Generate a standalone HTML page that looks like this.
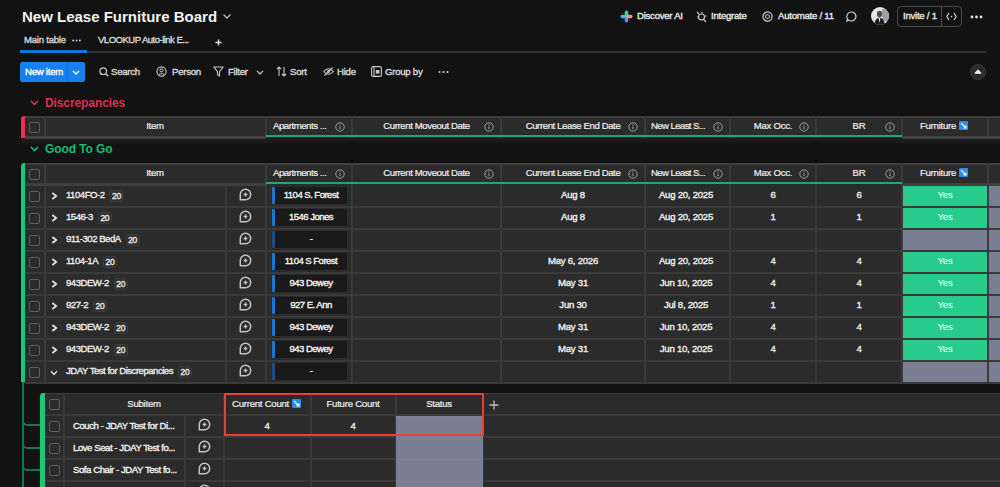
<!DOCTYPE html><html><head><meta charset="utf-8"><style>
html,body{margin:0;padding:0;width:1000px;height:487px;overflow:hidden;background:#121212;}
body{position:relative;font-family:"Liberation Sans",sans-serif;color:#f0f0f0;}
div{position:absolute;box-sizing:border-box;}
.t{white-space:nowrap;font-size:9.6px;line-height:12px;letter-spacing:-0.25px;-webkit-text-stroke:0.35px currentColor;}
.n{white-space:nowrap;}
.h{-webkit-text-stroke:0.2px currentColor;}
.c{text-align:center;transform-origin:center top;}
.bd{display:inline-block;margin-left:5px;padding:0 1.5px;height:10px;line-height:10px;border-radius:3px;background:#303030;border:1px solid #3c3c3c;font-size:8.5px;letter-spacing:-0.3px;color:#e8e8e8;vertical-align:top;margin-top:1px;}
svg{position:absolute;overflow:visible;}
</style></head><body>

<div class="n" style="left:22px;top:8px;font-size:15px;line-height:18px;font-weight:bold;letter-spacing:0px;color:#f2f2f2;">New Lease Furniture Board</div>
<svg style="left:222px;top:13px" width="10" height="7"><path d="M1.5 1.5 L5 5 L8.5 1.5" stroke="#bdbdbd" stroke-width="1.3" fill="none"/></svg>
<div class="t" style="left:24px;top:34px;color:#d8d8d8;">Main table</div>
<svg style="left:72px;top:39px" width="9" height="3"><circle cx="1.2" cy="1.5" r="1" fill="#d0d0d0"/><circle cx="4.5" cy="1.5" r="1" fill="#d0d0d0"/><circle cx="7.8" cy="1.5" r="1" fill="#d0d0d0"/></svg>
<div class="t" style="left:98px;top:34px;color:#d8d8d8;letter-spacing:-0.55px;">VLOOKUP Auto-link E...</div>
<svg style="left:215px;top:39px" width="7" height="7"><path d="M3.5 0.5 V6.5 M0.5 3.5 H6.5" stroke="#e0e0e0" stroke-width="1.4"/></svg>
<div style="left:20px;top:50.5px;width:966px;height:2.5px;background:#333333;"></div>
<div style="left:20px;top:50px;width:67px;height:3px;background:#1276e0;"></div>
<svg style="left:620px;top:10px" width="13" height="13" viewBox="0 0 13 13">
<rect x="4.7" y="0.5" width="3.6" height="6.5" rx="1.8" fill="#3ccf8e"/>
<rect x="0.5" y="4.7" width="6.5" height="3.6" rx="1.8" fill="#3cc0f0"/>
<rect x="4.7" y="6" width="3.6" height="6.5" rx="1.8" fill="#6f86f0"/>
<rect x="6" y="4.7" width="6.5" height="3.6" rx="1.8" fill="#f39a63"/>
</svg>
<div class="t" style="left:637px;top:10px;color:#e8e8e8;">Discover AI</div>
<svg style="left:696px;top:11px" width="11" height="11" viewBox="0 0 11 11">
<circle cx="5.5" cy="6" r="3" stroke="#cfcfcf" stroke-width="1.1" fill="none"/>
<path d="M1 1 L3 3 M8 9 L10 11 M1 6 h1.3 M9 5 h1.6 M6 1v1.4" stroke="#cfcfcf" stroke-width="1.1"/>
</svg>
<div class="t" style="left:711px;top:10px;color:#e8e8e8;">Integrate</div>
<svg style="left:762px;top:11px" width="11" height="11" viewBox="0 0 11 11">
<circle cx="5.5" cy="5.5" r="4.6" stroke="#cfcfcf" stroke-width="1.2" fill="none"/>
<rect x="3.6" y="3.8" width="3.8" height="3.4" rx="0.8" stroke="#cfcfcf" stroke-width="1" fill="none"/>
</svg>
<div class="t" style="left:778px;top:10px;color:#e8e8e8;">Automate / 11</div>
<svg style="left:846px;top:11px" width="11" height="11" viewBox="0 0 11 11">
<path d="M5.5 1 A4.5 4.5 0 1 1 2.6 9 L1 10 L1.6 8 A4.5 4.5 0 0 1 5.5 1Z" stroke="#cfcfcf" stroke-width="1.2" fill="none"/>
</svg>
<svg style="left:871px;top:7px" width="18" height="18" viewBox="0 0 18 18">
<defs><clipPath id="av"><circle cx="9" cy="9" r="9"/></clipPath></defs>
<g clip-path="url(#av)">
<rect width="18" height="18" fill="#e4e6ea"/>
<rect x="11" y="2" width="7" height="12" fill="#9aa3ad"/>
<ellipse cx="8.5" cy="7" rx="2.6" ry="3.2" fill="#5a4a42"/>
<path d="M3 18 Q4 11 8.5 10.5 Q13 11 14 18Z" fill="#1d1d1f"/>
<path d="M7.6 11 L8.5 16 L9.4 11Z" fill="#f0f0f0"/>
</g></svg>
<div style="left:897px;top:6px;width:65px;height:21px;border:1px solid #4a4a4a;border-radius:4px;"></div>
<div style="left:941px;top:6px;width:1px;height:21px;background:#4a4a4a;"></div>
<div class="t" style="left:903px;top:10px;color:#e8e8e8;">Invite / 1</div>
<svg style="left:946px;top:12px" width="11" height="9" viewBox="0 0 11 9">
<path d="M3 1 L0.8 4.5 L3 8 M8 1 L10.2 4.5 L8 8" stroke="#d0d0d0" stroke-width="1.2" fill="none"/>
<circle cx="5.5" cy="4.5" r="0.8" fill="#d0d0d0"/>
</svg>
<svg style="left:970px;top:15px" width="13" height="4"><circle cx="2" cy="2" r="1.4" fill="#e0e0e0"/><circle cx="6.5" cy="2" r="1.4" fill="#e0e0e0"/><circle cx="11" cy="2" r="1.4" fill="#e0e0e0"/></svg>
<div style="left:20px;top:62px;width:65px;height:20px;background:#1580ee;border-radius:2px;"></div>
<div style="left:67px;top:62px;width:1px;height:20px;background:#1170d6;"></div>
<div class="t" style="left:25px;top:66px;color:#ffffff;">New item</div>
<svg style="left:72px;top:70px" width="8" height="5"><path d="M1 1 L4 4 L7 1" stroke="#fff" stroke-width="1.3" fill="none"/></svg>
<svg style="left:99px;top:67px" width="10" height="10" viewBox="0 0 10 10"><circle cx="4.2" cy="4.2" r="3.3" stroke="#c8c8c8" stroke-width="1.2" fill="none"/><path d="M6.7 6.7 L9.3 9.3" stroke="#c8c8c8" stroke-width="1.3"/></svg>
<div class="t" style="left:111px;top:66px;color:#dcdcdc;">Search</div>
<svg style="left:156px;top:66px" width="11" height="11" viewBox="0 0 11 11"><circle cx="5.5" cy="5.5" r="4.6" stroke="#c8c8c8" stroke-width="1.1" fill="none"/><circle cx="5.5" cy="4.3" r="1.6" stroke="#c8c8c8" stroke-width="1" fill="none"/><path d="M2.8 8.5 Q5.5 5.8 8.2 8.5" stroke="#c8c8c8" stroke-width="1" fill="none"/></svg>
<div class="t" style="left:172px;top:66px;color:#dcdcdc;">Person</div>
<svg style="left:213px;top:66px" width="11" height="11" viewBox="0 0 11 11"><path d="M0.8 1 H10.2 L6.5 5.6 V10 L4.5 8.8 V5.6 Z" stroke="#c8c8c8" stroke-width="1.1" fill="none" stroke-linejoin="round"/></svg>
<div class="t" style="left:228px;top:66px;color:#dcdcdc;">Filter</div>
<svg style="left:256px;top:70px" width="8" height="5"><path d="M1 1 L4 4 L7 1" stroke="#c8c8c8" stroke-width="1.2" fill="none"/></svg>
<svg style="left:276px;top:66px" width="11" height="11" viewBox="0 0 11 11"><path d="M3 10 V1 M1 3 L3 1 L5 3 M8 1 V10 M6 8 L8 10 L10 8" stroke="#c8c8c8" stroke-width="1.1" fill="none"/></svg>
<div class="t" style="left:290px;top:66px;color:#dcdcdc;">Sort</div>
<svg style="left:323px;top:67px" width="11" height="9" viewBox="0 0 11 9"><path d="M0.7 4.5 Q5.5 -1 10.3 4.5 Q5.5 10 0.7 4.5Z" stroke="#c8c8c8" stroke-width="1.1" fill="none"/><circle cx="5.5" cy="4.5" r="1.5" fill="#c8c8c8"/><path d="M1.5 8.5 L9.5 0.5" stroke="#c8c8c8" stroke-width="1.1"/></svg>
<div class="t" style="left:337px;top:66px;color:#dcdcdc;">Hide</div>
<svg style="left:371px;top:66px" width="11" height="11" viewBox="0 0 11 11"><rect x="0.6" y="0.6" width="9.8" height="9.8" rx="1.5" stroke="#c8c8c8" stroke-width="1.1" fill="none"/><path d="M3 0.6 V10.4" stroke="#c8c8c8" stroke-width="1.1"/><rect x="4.8" y="4" width="3.6" height="3.6" fill="#c8c8c8"/></svg>
<div class="t" style="left:385px;top:66px;color:#dcdcdc;">Group by</div>
<svg style="left:438px;top:70px" width="11" height="4"><circle cx="1.5" cy="2" r="1.1" fill="#c8c8c8"/><circle cx="5.5" cy="2" r="1.1" fill="#c8c8c8"/><circle cx="9.5" cy="2" r="1.1" fill="#c8c8c8"/></svg>
<div style="left:970px;top:64px;width:16px;height:16px;border-radius:50%;background:#2c2c2c;border:1px solid #383838;"></div>
<svg style="left:974px;top:69px" width="8" height="5"><path d="M1.2 4.2 L4 1.2 L6.8 4.2 Z" stroke="#f0f0f0" stroke-width="1.2" fill="#f0f0f0" stroke-linejoin="round"/></svg>
<svg style="left:30px;top:100px" width="9" height="6"><path d="M1 1 L4.5 4.5 L8 1" stroke="#e8304f" stroke-width="1.5" fill="none"/></svg>
<div class="n" style="left:45px;top:96px;font-size:12px;line-height:15px;font-weight:bold;color:#dc2f50;letter-spacing:-0.1px;">Discrepancies</div>
<svg style="left:30px;top:146px" width="9" height="6"><path d="M1 1 L4.5 4.5 L8 1" stroke="#16c97c" stroke-width="1.5" fill="none"/></svg>
<div class="n" style="left:45px;top:142px;font-size:12px;line-height:15px;font-weight:bold;color:#14bd74;letter-spacing:-0.1px;">Good To Go</div>
<div style="left:21px;top:116px;width:4px;height:22px;background:#e8304f;border-radius:3px 0 0 0;"></div>
<div style="left:25px;top:116px;width:1000px;height:22px;background:#2b2b2b;"></div>
<div style="left:21px;top:115px;width:1000px;height:1px;background:#0e0e0e;"></div>
<div style="left:21px;top:138px;width:1000px;height:5px;background:#1a1a1a;"></div>
<div style="left:21px;top:163px;width:4px;height:22px;background:#16c97c;border-radius:3px 0 0 0;"></div>
<div style="left:25px;top:163px;width:1000px;height:22px;background:#2b2b2b;"></div>
<div style="left:21px;top:162px;width:1000px;height:1px;background:#0e0e0e;"></div>
<div style="left:21px;top:185px;width:4px;height:197px;background:#16c97c;"></div>
<div style="left:25px;top:185px;width:1000px;height:197px;background:#2b2b2b;"></div>
<div style="left:902px;top:185px;width:86px;height:22px;background:#27cb8b;"></div>
<div style="left:988px;top:185px;width:20px;height:22px;background:#7a7e93;"></div>
<div style="left:902px;top:207px;width:86px;height:22px;background:#27cb8b;"></div>
<div style="left:988px;top:207px;width:20px;height:22px;background:#7a7e93;"></div>
<div style="left:902px;top:229px;width:86px;height:22px;background:#7a7e93;"></div>
<div style="left:988px;top:229px;width:20px;height:22px;background:#7a7e93;"></div>
<div style="left:902px;top:251px;width:86px;height:22px;background:#27cb8b;"></div>
<div style="left:988px;top:251px;width:20px;height:22px;background:#7a7e93;"></div>
<div style="left:902px;top:273px;width:86px;height:22px;background:#27cb8b;"></div>
<div style="left:988px;top:273px;width:20px;height:22px;background:#7a7e93;"></div>
<div style="left:902px;top:295px;width:86px;height:22px;background:#27cb8b;"></div>
<div style="left:988px;top:295px;width:20px;height:22px;background:#7a7e93;"></div>
<div style="left:902px;top:317px;width:86px;height:22px;background:#27cb8b;"></div>
<div style="left:988px;top:317px;width:20px;height:22px;background:#7a7e93;"></div>
<div style="left:902px;top:339px;width:86px;height:22px;background:#27cb8b;"></div>
<div style="left:988px;top:339px;width:20px;height:22px;background:#7a7e93;"></div>
<div style="left:902px;top:361px;width:86px;height:22px;background:#7a7e93;"></div>
<div style="left:988px;top:361px;width:20px;height:22px;background:#7a7e93;"></div>
<div style="left:21px;top:382px;width:1000px;height:11px;background:#121212;"></div>
<div style="left:22px;top:382px;width:2px;height:105px;background:#1a7450;"></div>
<div style="left:22px;top:416px;width:19px;height:10px;border-left:2px solid #1a7450;border-bottom:2px solid #1a7450;border-bottom-left-radius:5px;"></div>
<div style="left:22px;top:439px;width:19px;height:10px;border-left:2px solid #1a7450;border-bottom:2px solid #1a7450;border-bottom-left-radius:5px;"></div>
<div style="left:22px;top:461px;width:19px;height:10px;border-left:2px solid #1a7450;border-bottom:2px solid #1a7450;border-bottom-left-radius:5px;"></div>
<div style="left:40px;top:393px;width:5px;height:94px;background:#16c97c;border-radius:3px 0 0 0;"></div>
<div style="left:45px;top:393px;width:1000px;height:94px;background:#2b2b2b;"></div>
<div style="left:25px;top:116px;width:1000px;height:2px;background:#404040;"></div>
<div style="left:44px;top:116px;width:2px;height:22px;background:#3a3a3a;"></div>
<div style="left:265px;top:116px;width:2px;height:22px;background:#3a3a3a;"></div>
<div style="left:351px;top:116px;width:2px;height:22px;background:#3a3a3a;"></div>
<div style="left:500px;top:116px;width:2px;height:22px;background:#3a3a3a;"></div>
<div style="left:644px;top:116px;width:2px;height:22px;background:#3a3a3a;"></div>
<div style="left:729px;top:116px;width:2px;height:22px;background:#3a3a3a;"></div>
<div style="left:815px;top:116px;width:2px;height:22px;background:#3a3a3a;"></div>
<div style="left:901px;top:116px;width:2px;height:22px;background:#3a3a3a;"></div>
<div style="left:987px;top:116px;width:2px;height:22px;background:#3a3a3a;"></div>
<div style="left:25px;top:136px;width:241px;height:3px;background:#404040;"></div>
<div style="left:902px;top:136px;width:200px;height:3px;background:#404040;"></div>
<div style="left:266px;top:135px;width:636px;height:2px;background:#24a373;"></div>
<div style="left:25px;top:163px;width:1000px;height:2px;background:#404040;"></div>
<div style="left:44px;top:163px;width:2px;height:22px;background:#3a3a3a;"></div>
<div style="left:265px;top:163px;width:2px;height:22px;background:#3a3a3a;"></div>
<div style="left:351px;top:163px;width:2px;height:22px;background:#3a3a3a;"></div>
<div style="left:500px;top:163px;width:2px;height:22px;background:#3a3a3a;"></div>
<div style="left:644px;top:163px;width:2px;height:22px;background:#3a3a3a;"></div>
<div style="left:729px;top:163px;width:2px;height:22px;background:#3a3a3a;"></div>
<div style="left:815px;top:163px;width:2px;height:22px;background:#3a3a3a;"></div>
<div style="left:901px;top:163px;width:2px;height:22px;background:#3a3a3a;"></div>
<div style="left:987px;top:163px;width:2px;height:22px;background:#3a3a3a;"></div>
<div style="left:25px;top:183px;width:241px;height:3px;background:#404040;"></div>
<div style="left:902px;top:183px;width:200px;height:3px;background:#404040;"></div>
<div style="left:266px;top:182px;width:636px;height:2px;background:#24a373;"></div>
<div style="left:44px;top:185px;width:2px;height:197px;background:#3a3a3a;"></div>
<div style="left:265px;top:185px;width:2px;height:197px;background:#3a3a3a;"></div>
<div style="left:351px;top:185px;width:2px;height:197px;background:#3a3a3a;"></div>
<div style="left:500px;top:185px;width:2px;height:197px;background:#3a3a3a;"></div>
<div style="left:644px;top:185px;width:2px;height:197px;background:#3a3a3a;"></div>
<div style="left:729px;top:185px;width:2px;height:197px;background:#3a3a3a;"></div>
<div style="left:815px;top:185px;width:2px;height:197px;background:#3a3a3a;"></div>
<div style="left:901px;top:185px;width:2px;height:197px;background:#3a3a3a;"></div>
<div style="left:987px;top:185px;width:2px;height:197px;background:#3a3a3a;"></div>
<div style="left:225px;top:185px;width:2px;height:197px;background:#3a3a3a;"></div>
<div style="left:25px;top:206px;width:1000px;height:2px;background:#3a3a3a;"></div>
<div style="left:25px;top:228px;width:1000px;height:2px;background:#3a3a3a;"></div>
<div style="left:25px;top:250px;width:1000px;height:2px;background:#3a3a3a;"></div>
<div style="left:25px;top:272px;width:1000px;height:2px;background:#3a3a3a;"></div>
<div style="left:25px;top:294px;width:1000px;height:2px;background:#3a3a3a;"></div>
<div style="left:25px;top:316px;width:1000px;height:2px;background:#3a3a3a;"></div>
<div style="left:25px;top:338px;width:1000px;height:2px;background:#3a3a3a;"></div>
<div style="left:25px;top:360px;width:1000px;height:2px;background:#3a3a3a;"></div>
<div style="left:25px;top:382px;width:1000px;height:2px;background:#3a3a3a;"></div>
<div style="left:45px;top:393px;width:1000px;height:1px;background:#404040;"></div>
<div style="left:63px;top:393px;width:2px;height:94px;background:#3a3a3a;"></div>
<div style="left:223px;top:393px;width:2px;height:94px;background:#3a3a3a;"></div>
<div style="left:310px;top:393px;width:2px;height:94px;background:#3a3a3a;"></div>
<div style="left:395px;top:393px;width:2px;height:94px;background:#3a3a3a;"></div>
<div style="left:482px;top:393px;width:2px;height:94px;background:#3a3a3a;"></div>
<div style="left:184px;top:415px;width:2px;height:72px;background:#3a3a3a;"></div>
<div style="left:45px;top:414px;width:1000px;height:2px;background:#3a3a3a;"></div>
<div style="left:45px;top:436px;width:1000px;height:2px;background:#3a3a3a;"></div>
<div style="left:45px;top:458px;width:1000px;height:2px;background:#3a3a3a;"></div>
<div style="left:45px;top:480px;width:1000px;height:2px;background:#3a3a3a;"></div>
<div style="left:29px;top:122px;width:11px;height:11px;border:1.2px solid #5e5e5e;border-radius:2px;"></div>
<div class="t h c" style="left:5px;top:120px;width:300px;">Item</div>
<div class="t h" style="left:273px;top:120px;letter-spacing:-0.45px;">Apartments ...</div>
<svg style="left:335px;top:122px" width="10" height="10" viewBox="0 0 10 10"><circle cx="5" cy="5" r="4.2" stroke="#a8a8a8" stroke-width="0.9" fill="none"/><path d="M5 4.4 V7.2" stroke="#a8a8a8" stroke-width="1"/><circle cx="5" cy="2.9" r="0.55" fill="#a8a8a8"/></svg>
<div class="t h c" style="left:276.5px;top:120px;width:300px;letter-spacing:-0.4px;">Current Moveout Date</div>
<svg style="left:484px;top:122px" width="10" height="10" viewBox="0 0 10 10"><circle cx="5" cy="5" r="4.2" stroke="#a8a8a8" stroke-width="0.9" fill="none"/><path d="M5 4.4 V7.2" stroke="#a8a8a8" stroke-width="1"/><circle cx="5" cy="2.9" r="0.55" fill="#a8a8a8"/></svg>
<div class="t h c" style="left:423.0px;top:120px;width:300px;letter-spacing:-0.4px;">Current Lease End Date</div>
<svg style="left:628px;top:122px" width="10" height="10" viewBox="0 0 10 10"><circle cx="5" cy="5" r="4.2" stroke="#a8a8a8" stroke-width="0.9" fill="none"/><path d="M5 4.4 V7.2" stroke="#a8a8a8" stroke-width="1"/><circle cx="5" cy="2.9" r="0.55" fill="#a8a8a8"/></svg>
<div class="t h" style="left:651px;top:120px;letter-spacing:-0.6px;">New Least S...</div>
<svg style="left:713px;top:122px" width="10" height="10" viewBox="0 0 10 10"><circle cx="5" cy="5" r="4.2" stroke="#a8a8a8" stroke-width="0.9" fill="none"/><path d="M5 4.4 V7.2" stroke="#a8a8a8" stroke-width="1"/><circle cx="5" cy="2.9" r="0.55" fill="#a8a8a8"/></svg>
<div class="t h c" style="left:623.0px;top:120px;width:300px;">Max Occ.</div>
<svg style="left:799px;top:122px" width="10" height="10" viewBox="0 0 10 10"><circle cx="5" cy="5" r="4.2" stroke="#a8a8a8" stroke-width="0.9" fill="none"/><path d="M5 4.4 V7.2" stroke="#a8a8a8" stroke-width="1"/><circle cx="5" cy="2.9" r="0.55" fill="#a8a8a8"/></svg>
<div class="t h c" style="left:709.0px;top:120px;width:300px;">BR</div>
<svg style="left:885px;top:122px" width="10" height="10" viewBox="0 0 10 10"><circle cx="5" cy="5" r="4.2" stroke="#a8a8a8" stroke-width="0.9" fill="none"/><path d="M5 4.4 V7.2" stroke="#a8a8a8" stroke-width="1"/><circle cx="5" cy="2.9" r="0.55" fill="#a8a8a8"/></svg>
<div class="t h c" style="left:788px;top:120px;width:300px;">Furniture</div>
<svg style="left:959px;top:121px" width="9" height="9" viewBox="0 0 9 9"><rect width="9" height="9" rx="1" fill="#2f8be6"/><path d="M2 2 L7 7 M7 4.5 V7 H4.5" stroke="#ffffff" stroke-width="1.1" fill="none"/></svg>
<div style="left:29px;top:169px;width:11px;height:11px;border:1.2px solid #5e5e5e;border-radius:2px;"></div>
<div class="t h c" style="left:5px;top:167px;width:300px;">Item</div>
<div class="t h" style="left:273px;top:167px;letter-spacing:-0.45px;">Apartments ...</div>
<svg style="left:335px;top:169px" width="10" height="10" viewBox="0 0 10 10"><circle cx="5" cy="5" r="4.2" stroke="#a8a8a8" stroke-width="0.9" fill="none"/><path d="M5 4.4 V7.2" stroke="#a8a8a8" stroke-width="1"/><circle cx="5" cy="2.9" r="0.55" fill="#a8a8a8"/></svg>
<div class="t h c" style="left:276.5px;top:167px;width:300px;letter-spacing:-0.4px;">Current Moveout Date</div>
<svg style="left:484px;top:169px" width="10" height="10" viewBox="0 0 10 10"><circle cx="5" cy="5" r="4.2" stroke="#a8a8a8" stroke-width="0.9" fill="none"/><path d="M5 4.4 V7.2" stroke="#a8a8a8" stroke-width="1"/><circle cx="5" cy="2.9" r="0.55" fill="#a8a8a8"/></svg>
<div class="t h c" style="left:423.0px;top:167px;width:300px;letter-spacing:-0.4px;">Current Lease End Date</div>
<svg style="left:628px;top:169px" width="10" height="10" viewBox="0 0 10 10"><circle cx="5" cy="5" r="4.2" stroke="#a8a8a8" stroke-width="0.9" fill="none"/><path d="M5 4.4 V7.2" stroke="#a8a8a8" stroke-width="1"/><circle cx="5" cy="2.9" r="0.55" fill="#a8a8a8"/></svg>
<div class="t h" style="left:651px;top:167px;letter-spacing:-0.6px;">New Least S...</div>
<svg style="left:713px;top:169px" width="10" height="10" viewBox="0 0 10 10"><circle cx="5" cy="5" r="4.2" stroke="#a8a8a8" stroke-width="0.9" fill="none"/><path d="M5 4.4 V7.2" stroke="#a8a8a8" stroke-width="1"/><circle cx="5" cy="2.9" r="0.55" fill="#a8a8a8"/></svg>
<div class="t h c" style="left:623.0px;top:167px;width:300px;">Max Occ.</div>
<svg style="left:799px;top:169px" width="10" height="10" viewBox="0 0 10 10"><circle cx="5" cy="5" r="4.2" stroke="#a8a8a8" stroke-width="0.9" fill="none"/><path d="M5 4.4 V7.2" stroke="#a8a8a8" stroke-width="1"/><circle cx="5" cy="2.9" r="0.55" fill="#a8a8a8"/></svg>
<div class="t h c" style="left:709.0px;top:167px;width:300px;">BR</div>
<svg style="left:885px;top:169px" width="10" height="10" viewBox="0 0 10 10"><circle cx="5" cy="5" r="4.2" stroke="#a8a8a8" stroke-width="0.9" fill="none"/><path d="M5 4.4 V7.2" stroke="#a8a8a8" stroke-width="1"/><circle cx="5" cy="2.9" r="0.55" fill="#a8a8a8"/></svg>
<div class="t h c" style="left:788px;top:167px;width:300px;">Furniture</div>
<svg style="left:959px;top:168px" width="9" height="9" viewBox="0 0 9 9"><rect width="9" height="9" rx="1" fill="#2f8be6"/><path d="M2 2 L7 7 M7 4.5 V7 H4.5" stroke="#ffffff" stroke-width="1.1" fill="none"/></svg>
<div class="t c" style="left:795px;top:189px;width:300px;color:#ffffff;-webkit-text-stroke:0px;">Yes</div>
<div style="left:29px;top:191px;width:11px;height:11px;border:1.2px solid #5e5e5e;border-radius:2px;"></div>
<svg style="left:51px;top:192px" width="7" height="8"><path d="M1.3 1 L5.3 4 L1.3 7" stroke="#e8e8e8" stroke-width="1.6" fill="none"/></svg>
<div class="t" style="left:66px;top:189px;color:#ececec;letter-spacing:-0.5px;">1104FO-2<span class="bd">20</span></div>
<svg style="left:239px;top:188px" width="13" height="13" viewBox="0 0 13 13"><path d="M1.3 6.5 A5.2 5.2 0 1 1 6.5 11.7 H1.3 Z" stroke="#c4c4c4" stroke-width="1.5" fill="none" stroke-linejoin="round"/><path d="M6.5 4.6 V8.4 M4.6 6.5 H8.4" stroke="#c4c4c4" stroke-width="1.3"/></svg>
<div style="left:272px;top:187px;width:3px;height:17px;background:#1f76d2;border-radius:1px;"></div>
<div style="left:275px;top:187px;width:72px;height:17px;background:#1a1a1a;"></div>
<div class="t c" style="left:161px;top:189px;width:300px;color:#f4f4f4;letter-spacing:-0.55px;">1104 S. Forest</div>
<div class="t c" style="left:423px;top:189px;width:300px;">Aug 8</div>
<div class="t c" style="left:536px;top:189px;width:300px;">Aug 20, 2025</div>
<div class="t c" style="left:623px;top:189px;width:300px;">6</div>
<div class="t c" style="left:709px;top:189px;width:300px;">6</div>
<div class="t c" style="left:795px;top:211px;width:300px;color:#ffffff;-webkit-text-stroke:0px;">Yes</div>
<div style="left:29px;top:213px;width:11px;height:11px;border:1.2px solid #5e5e5e;border-radius:2px;"></div>
<svg style="left:51px;top:214px" width="7" height="8"><path d="M1.3 1 L5.3 4 L1.3 7" stroke="#e8e8e8" stroke-width="1.6" fill="none"/></svg>
<div class="t" style="left:66px;top:211px;color:#ececec;letter-spacing:-0.5px;">1546-3<span class="bd">20</span></div>
<svg style="left:239px;top:210px" width="13" height="13" viewBox="0 0 13 13"><path d="M1.3 6.5 A5.2 5.2 0 1 1 6.5 11.7 H1.3 Z" stroke="#c4c4c4" stroke-width="1.5" fill="none" stroke-linejoin="round"/><path d="M6.5 4.6 V8.4 M4.6 6.5 H8.4" stroke="#c4c4c4" stroke-width="1.3"/></svg>
<div style="left:272px;top:209px;width:3px;height:17px;background:#1f76d2;border-radius:1px;"></div>
<div style="left:275px;top:209px;width:72px;height:17px;background:#1a1a1a;"></div>
<div class="t c" style="left:161px;top:211px;width:300px;color:#f4f4f4;letter-spacing:-0.55px;">1546 Jones</div>
<div class="t c" style="left:423px;top:211px;width:300px;">Aug 8</div>
<div class="t c" style="left:536px;top:211px;width:300px;">Aug 20, 2025</div>
<div class="t c" style="left:623px;top:211px;width:300px;">1</div>
<div class="t c" style="left:709px;top:211px;width:300px;">1</div>
<div style="left:29px;top:235px;width:11px;height:11px;border:1.2px solid #5e5e5e;border-radius:2px;"></div>
<svg style="left:51px;top:236px" width="7" height="8"><path d="M1.3 1 L5.3 4 L1.3 7" stroke="#e8e8e8" stroke-width="1.6" fill="none"/></svg>
<div class="t" style="left:66px;top:233px;color:#ececec;letter-spacing:-0.5px;">911-302 BedA<span class="bd">20</span></div>
<svg style="left:239px;top:232px" width="13" height="13" viewBox="0 0 13 13"><path d="M1.3 6.5 A5.2 5.2 0 1 1 6.5 11.7 H1.3 Z" stroke="#c4c4c4" stroke-width="1.5" fill="none" stroke-linejoin="round"/><path d="M6.5 4.6 V8.4 M4.6 6.5 H8.4" stroke="#c4c4c4" stroke-width="1.3"/></svg>
<div style="left:272px;top:231px;width:3px;height:17px;background:#1b4f86;border-radius:1px;"></div>
<div style="left:275px;top:231px;width:72px;height:17px;background:#1a1a1a;"></div>
<div class="t c" style="left:161px;top:233px;width:300px;color:#f4f4f4;letter-spacing:-0.55px;">-</div>
<div class="t c" style="left:795px;top:255px;width:300px;color:#ffffff;-webkit-text-stroke:0px;">Yes</div>
<div style="left:29px;top:257px;width:11px;height:11px;border:1.2px solid #5e5e5e;border-radius:2px;"></div>
<svg style="left:51px;top:258px" width="7" height="8"><path d="M1.3 1 L5.3 4 L1.3 7" stroke="#e8e8e8" stroke-width="1.6" fill="none"/></svg>
<div class="t" style="left:66px;top:255px;color:#ececec;letter-spacing:-0.5px;">1104-1A<span class="bd">20</span></div>
<svg style="left:239px;top:254px" width="13" height="13" viewBox="0 0 13 13"><path d="M1.3 6.5 A5.2 5.2 0 1 1 6.5 11.7 H1.3 Z" stroke="#c4c4c4" stroke-width="1.5" fill="none" stroke-linejoin="round"/><path d="M6.5 4.6 V8.4 M4.6 6.5 H8.4" stroke="#c4c4c4" stroke-width="1.3"/></svg>
<div style="left:272px;top:253px;width:3px;height:17px;background:#1f76d2;border-radius:1px;"></div>
<div style="left:275px;top:253px;width:72px;height:17px;background:#1a1a1a;"></div>
<div class="t c" style="left:161px;top:255px;width:300px;color:#f4f4f4;letter-spacing:-0.55px;">1104 S Forest</div>
<div class="t c" style="left:423px;top:255px;width:300px;">May 6, 2026</div>
<div class="t c" style="left:536px;top:255px;width:300px;">Aug 20, 2025</div>
<div class="t c" style="left:623px;top:255px;width:300px;">4</div>
<div class="t c" style="left:709px;top:255px;width:300px;">4</div>
<div class="t c" style="left:795px;top:277px;width:300px;color:#ffffff;-webkit-text-stroke:0px;">Yes</div>
<div style="left:29px;top:279px;width:11px;height:11px;border:1.2px solid #5e5e5e;border-radius:2px;"></div>
<svg style="left:51px;top:280px" width="7" height="8"><path d="M1.3 1 L5.3 4 L1.3 7" stroke="#e8e8e8" stroke-width="1.6" fill="none"/></svg>
<div class="t" style="left:66px;top:277px;color:#ececec;letter-spacing:-0.5px;">943DEW-2<span class="bd">20</span></div>
<svg style="left:239px;top:276px" width="13" height="13" viewBox="0 0 13 13"><path d="M1.3 6.5 A5.2 5.2 0 1 1 6.5 11.7 H1.3 Z" stroke="#c4c4c4" stroke-width="1.5" fill="none" stroke-linejoin="round"/><path d="M6.5 4.6 V8.4 M4.6 6.5 H8.4" stroke="#c4c4c4" stroke-width="1.3"/></svg>
<div style="left:272px;top:275px;width:3px;height:17px;background:#1f76d2;border-radius:1px;"></div>
<div style="left:275px;top:275px;width:72px;height:17px;background:#1a1a1a;"></div>
<div class="t c" style="left:161px;top:277px;width:300px;color:#f4f4f4;letter-spacing:-0.55px;">943 Dewey</div>
<div class="t c" style="left:423px;top:277px;width:300px;">May 31</div>
<div class="t c" style="left:536px;top:277px;width:300px;">Jun 10, 2025</div>
<div class="t c" style="left:623px;top:277px;width:300px;">4</div>
<div class="t c" style="left:709px;top:277px;width:300px;">4</div>
<div class="t c" style="left:795px;top:299px;width:300px;color:#ffffff;-webkit-text-stroke:0px;">Yes</div>
<div style="left:29px;top:301px;width:11px;height:11px;border:1.2px solid #5e5e5e;border-radius:2px;"></div>
<svg style="left:51px;top:302px" width="7" height="8"><path d="M1.3 1 L5.3 4 L1.3 7" stroke="#e8e8e8" stroke-width="1.6" fill="none"/></svg>
<div class="t" style="left:66px;top:299px;color:#ececec;letter-spacing:-0.5px;">927-2<span class="bd">20</span></div>
<svg style="left:239px;top:298px" width="13" height="13" viewBox="0 0 13 13"><path d="M1.3 6.5 A5.2 5.2 0 1 1 6.5 11.7 H1.3 Z" stroke="#c4c4c4" stroke-width="1.5" fill="none" stroke-linejoin="round"/><path d="M6.5 4.6 V8.4 M4.6 6.5 H8.4" stroke="#c4c4c4" stroke-width="1.3"/></svg>
<div style="left:272px;top:297px;width:3px;height:17px;background:#1f76d2;border-radius:1px;"></div>
<div style="left:275px;top:297px;width:72px;height:17px;background:#1a1a1a;"></div>
<div class="t c" style="left:161px;top:299px;width:300px;color:#f4f4f4;letter-spacing:-0.55px;">927 E. Ann</div>
<div class="t c" style="left:423px;top:299px;width:300px;">Jun 30</div>
<div class="t c" style="left:536px;top:299px;width:300px;">Jul 8, 2025</div>
<div class="t c" style="left:623px;top:299px;width:300px;">1</div>
<div class="t c" style="left:709px;top:299px;width:300px;">1</div>
<div class="t c" style="left:795px;top:321px;width:300px;color:#ffffff;-webkit-text-stroke:0px;">Yes</div>
<div style="left:29px;top:323px;width:11px;height:11px;border:1.2px solid #5e5e5e;border-radius:2px;"></div>
<svg style="left:51px;top:324px" width="7" height="8"><path d="M1.3 1 L5.3 4 L1.3 7" stroke="#e8e8e8" stroke-width="1.6" fill="none"/></svg>
<div class="t" style="left:66px;top:321px;color:#ececec;letter-spacing:-0.5px;">943DEW-2<span class="bd">20</span></div>
<svg style="left:239px;top:320px" width="13" height="13" viewBox="0 0 13 13"><path d="M1.3 6.5 A5.2 5.2 0 1 1 6.5 11.7 H1.3 Z" stroke="#c4c4c4" stroke-width="1.5" fill="none" stroke-linejoin="round"/><path d="M6.5 4.6 V8.4 M4.6 6.5 H8.4" stroke="#c4c4c4" stroke-width="1.3"/></svg>
<div style="left:272px;top:319px;width:3px;height:17px;background:#1f76d2;border-radius:1px;"></div>
<div style="left:275px;top:319px;width:72px;height:17px;background:#1a1a1a;"></div>
<div class="t c" style="left:161px;top:321px;width:300px;color:#f4f4f4;letter-spacing:-0.55px;">943 Dewey</div>
<div class="t c" style="left:423px;top:321px;width:300px;">May 31</div>
<div class="t c" style="left:536px;top:321px;width:300px;">Jun 10, 2025</div>
<div class="t c" style="left:623px;top:321px;width:300px;">4</div>
<div class="t c" style="left:709px;top:321px;width:300px;">4</div>
<div class="t c" style="left:795px;top:343px;width:300px;color:#ffffff;-webkit-text-stroke:0px;">Yes</div>
<div style="left:29px;top:345px;width:11px;height:11px;border:1.2px solid #5e5e5e;border-radius:2px;"></div>
<svg style="left:51px;top:346px" width="7" height="8"><path d="M1.3 1 L5.3 4 L1.3 7" stroke="#e8e8e8" stroke-width="1.6" fill="none"/></svg>
<div class="t" style="left:66px;top:343px;color:#ececec;letter-spacing:-0.5px;">943DEW-2<span class="bd">20</span></div>
<svg style="left:239px;top:342px" width="13" height="13" viewBox="0 0 13 13"><path d="M1.3 6.5 A5.2 5.2 0 1 1 6.5 11.7 H1.3 Z" stroke="#c4c4c4" stroke-width="1.5" fill="none" stroke-linejoin="round"/><path d="M6.5 4.6 V8.4 M4.6 6.5 H8.4" stroke="#c4c4c4" stroke-width="1.3"/></svg>
<div style="left:272px;top:341px;width:3px;height:17px;background:#1f76d2;border-radius:1px;"></div>
<div style="left:275px;top:341px;width:72px;height:17px;background:#1a1a1a;"></div>
<div class="t c" style="left:161px;top:343px;width:300px;color:#f4f4f4;letter-spacing:-0.55px;">943 Dewey</div>
<div class="t c" style="left:423px;top:343px;width:300px;">May 31</div>
<div class="t c" style="left:536px;top:343px;width:300px;">Jun 10, 2025</div>
<div class="t c" style="left:623px;top:343px;width:300px;">4</div>
<div class="t c" style="left:709px;top:343px;width:300px;">4</div>
<div style="left:29px;top:367px;width:11px;height:11px;border:1.2px solid #5e5e5e;border-radius:2px;"></div>
<svg style="left:50px;top:370px" width="8" height="6"><path d="M1 1.2 L4 4.5 L7 1.2" stroke="#e0e0e0" stroke-width="1.4" fill="none"/></svg>
<div class="t" style="left:66px;top:365px;color:#ececec;letter-spacing:-0.5px;">JDAY Test for Discrepancies<span class="bd">20</span></div>
<svg style="left:239px;top:364px" width="13" height="13" viewBox="0 0 13 13"><path d="M1.3 6.5 A5.2 5.2 0 1 1 6.5 11.7 H1.3 Z" stroke="#c4c4c4" stroke-width="1.5" fill="none" stroke-linejoin="round"/><path d="M6.5 4.6 V8.4 M4.6 6.5 H8.4" stroke="#c4c4c4" stroke-width="1.3"/></svg>
<div style="left:272px;top:363px;width:3px;height:17px;background:#1b4f86;border-radius:1px;"></div>
<div style="left:275px;top:363px;width:72px;height:17px;background:#1a1a1a;"></div>
<div class="t c" style="left:161px;top:365px;width:300px;color:#f4f4f4;letter-spacing:-0.55px;">-</div>
<div style="left:396px;top:416px;width:87px;height:22px;background:#7a7e93;border-top:1px solid #80849a;"></div>
<div class="t" style="left:73px;top:420px;letter-spacing:-0.45px;">Couch - JDAY Test for Di...</div>
<svg style="left:198px;top:418px" width="13" height="13" viewBox="0 0 13 13"><path d="M1.3 6.5 A5.2 5.2 0 1 1 6.5 11.7 H1.3 Z" stroke="#c4c4c4" stroke-width="1.5" fill="none" stroke-linejoin="round"/><path d="M6.5 4.6 V8.4 M4.6 6.5 H8.4" stroke="#c4c4c4" stroke-width="1.3"/></svg>
<div style="left:396px;top:437px;width:87px;height:22px;background:#7a7e93;border-top:1px solid #80849a;"></div>
<div class="t" style="left:73px;top:442px;letter-spacing:-0.45px;">Love Seat - JDAY Test fo...</div>
<svg style="left:198px;top:440px" width="13" height="13" viewBox="0 0 13 13"><path d="M1.3 6.5 A5.2 5.2 0 1 1 6.5 11.7 H1.3 Z" stroke="#c4c4c4" stroke-width="1.5" fill="none" stroke-linejoin="round"/><path d="M6.5 4.6 V8.4 M4.6 6.5 H8.4" stroke="#c4c4c4" stroke-width="1.3"/></svg>
<div style="left:396px;top:459px;width:87px;height:22px;background:#7a7e93;border-top:1px solid #80849a;"></div>
<div class="t" style="left:73px;top:464px;letter-spacing:-0.45px;">Sofa Chair - JDAY Test fo...</div>
<svg style="left:198px;top:462px" width="13" height="13" viewBox="0 0 13 13"><path d="M1.3 6.5 A5.2 5.2 0 1 1 6.5 11.7 H1.3 Z" stroke="#c4c4c4" stroke-width="1.5" fill="none" stroke-linejoin="round"/><path d="M6.5 4.6 V8.4 M4.6 6.5 H8.4" stroke="#c4c4c4" stroke-width="1.3"/></svg>
<div style="left:396px;top:481px;width:87px;height:22px;background:#7a7e93;border-top:1px solid #80849a;"></div>
<svg style="left:198px;top:484px" width="13" height="13" viewBox="0 0 13 13"><path d="M1.3 6.5 A5.2 5.2 0 1 1 6.5 11.7 H1.3 Z" stroke="#c4c4c4" stroke-width="1.5" fill="none" stroke-linejoin="round"/><path d="M6.5 4.6 V8.4 M4.6 6.5 H8.4" stroke="#c4c4c4" stroke-width="1.3"/></svg>
<div style="left:49px;top:399px;width:11px;height:11px;border:1.2px solid #5e5e5e;border-radius:2px;"></div>
<div style="left:49px;top:421px;width:11px;height:11px;border:1.2px solid #5e5e5e;border-radius:2px;"></div>
<div style="left:49px;top:443px;width:11px;height:11px;border:1.2px solid #5e5e5e;border-radius:2px;"></div>
<div style="left:49px;top:465px;width:11px;height:11px;border:1.2px solid #5e5e5e;border-radius:2px;"></div>
<div style="left:49px;top:487px;width:11px;height:11px;border:1.2px solid #5e5e5e;border-radius:2px;"></div>
<div class="t h c" style="left:-6px;top:398px;width:300px;">Subitem</div>
<div class="t h" style="left:232px;top:398px;">Current Count</div>
<svg style="left:292px;top:399px" width="9" height="9" viewBox="0 0 9 9"><rect width="9" height="9" rx="1" fill="#2f8be6"/><path d="M2 2 L7 7 M7 4.5 V7 H4.5" stroke="#ffffff" stroke-width="1.1" fill="none"/></svg>
<div class="t h c" style="left:203px;top:398px;width:300px;">Future Count</div>
<div class="t h c" style="left:289px;top:398px;width:300px;">Status</div>
<svg style="left:489px;top:400px" width="10" height="10"><path d="M5 0.5 V9.5 M0.5 5 H9.5" stroke="#bdbdbd" stroke-width="1.3"/></svg>
<div class="t c" style="left:117px;top:420px;width:300px;">4</div>
<div class="t c" style="left:203px;top:420px;width:300px;">4</div>
<div style="left:224px;top:393px;width:260px;height:43px;border:2px solid #e5403a;"></div>
</body></html>
